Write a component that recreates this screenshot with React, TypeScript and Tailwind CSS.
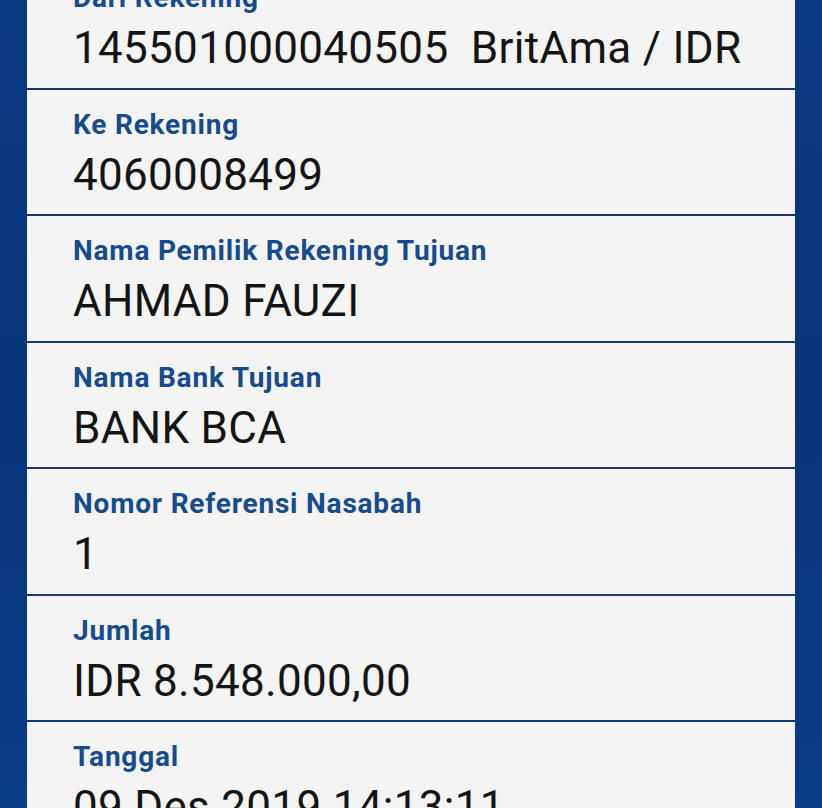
import React from "react";

const rows = [
  { label: "Dari Rekening", value: "145501000040505\u00a0\u00a0BritAma / IDR" },
  { label: "Ke Rekening", value: "4060008499" },
  { label: "Nama Pemilik Rekening Tujuan", value: "AHMAD FAUZI" },
  { label: "Nama Bank Tujuan", value: "BANK BCA" },
  { label: "Nomor Referensi Nasabah", value: "1" },
  { label: "Jumlah", value: "IDR 8.548.000,00" },
  { label: "Tanggal", value: "09 Des 2019 14:13:11" },
];

export default function App() {
  return (
    <div
      className="w-[822px] h-[808px] overflow-hidden bg-gradient-to-b from-[#0a3a82] via-[#08357a] to-[#0a3d88] flex justify-center"
      style={{ fontFamily: "Roboto, 'Liberation Sans', sans-serif" }}
    >
      <div className="w-[768px] flex flex-col -mt-[37px] bg-[#f4f4f4] shrink-0">
        {rows.map((r, i) => (
          <div
            key={i}
            className="h-[126.5px] shrink-0 border-b-2 border-[#123d73] pl-[46px] pt-[18px] flex flex-col"
          >
            <div className="text-[28px] leading-[33px] font-bold text-[#164b8e] tracking-[0.8px] whitespace-nowrap">
              {r.label}
            </div>
            <div className="text-[44px] leading-[50px] text-[#141414] mt-[9px] tracking-[0.3px] whitespace-nowrap">
              {r.value}
            </div>
          </div>
        ))}
      </div>
    </div>
  );
}
